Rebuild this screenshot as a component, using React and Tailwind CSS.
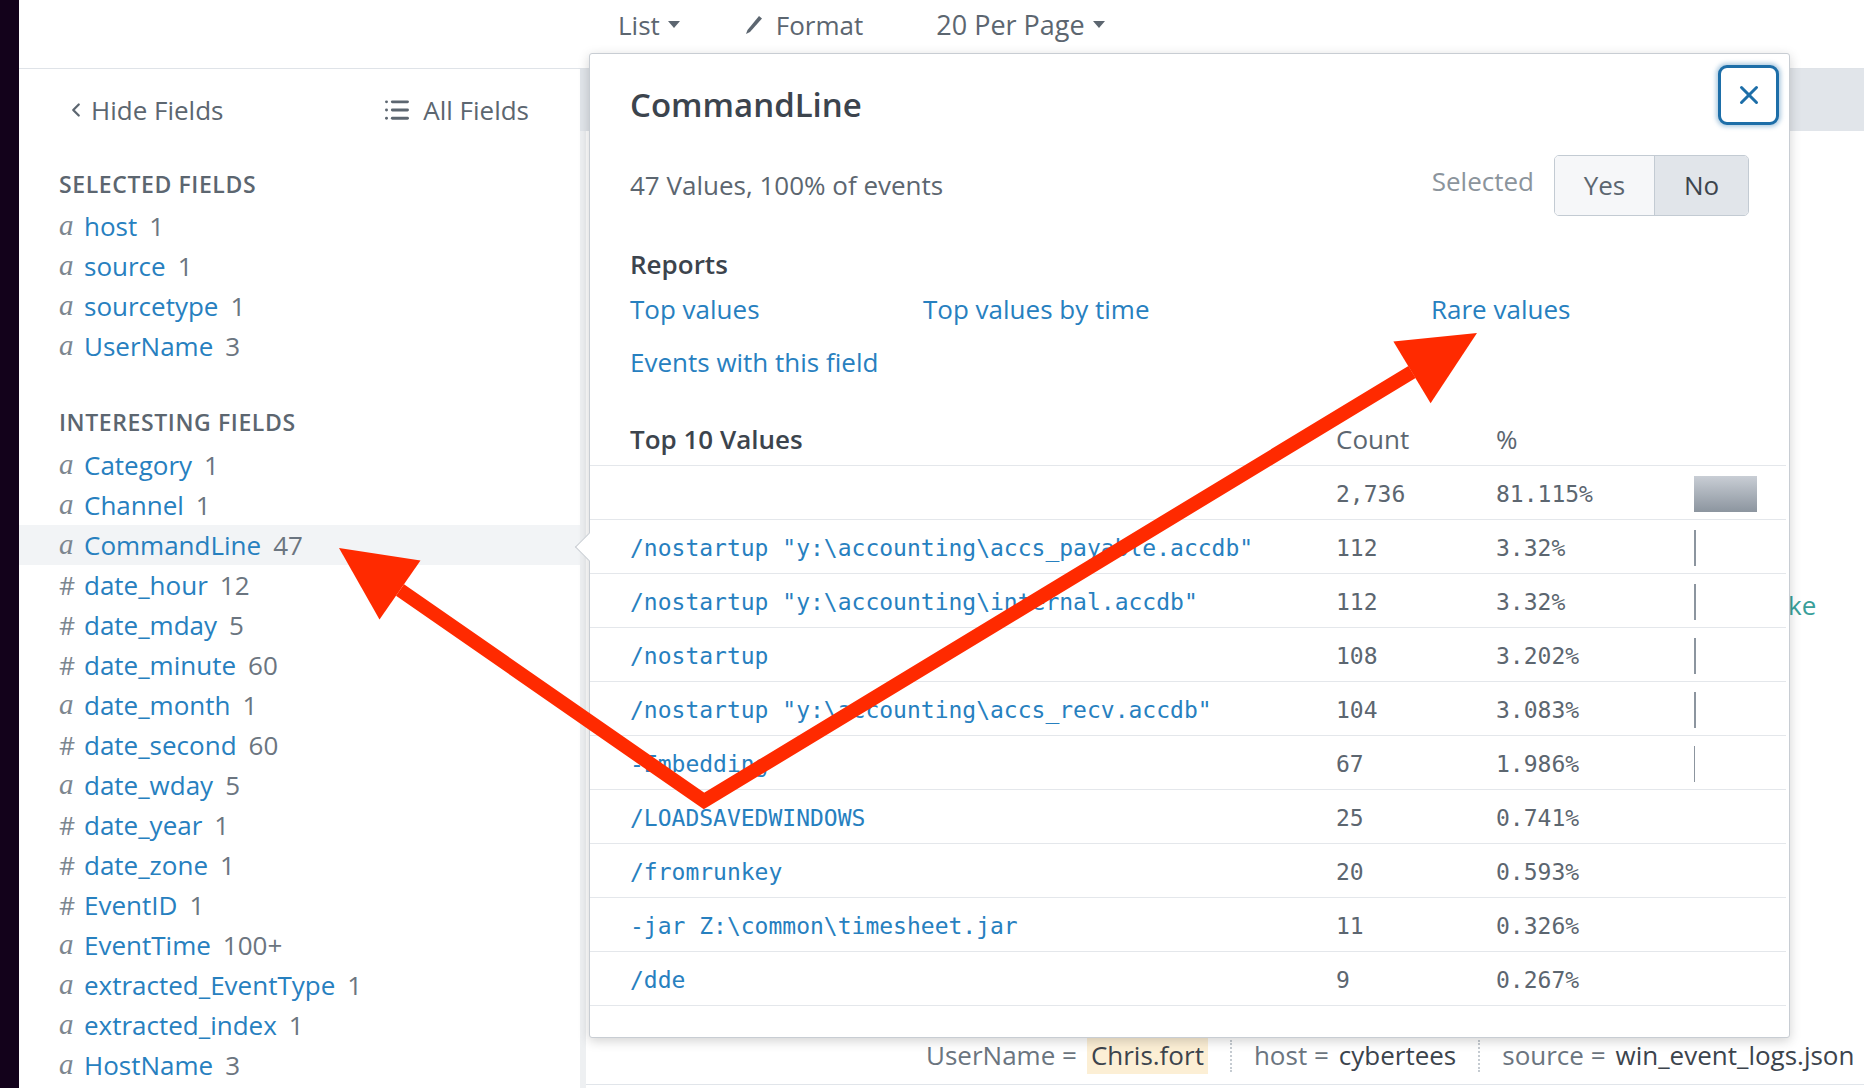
import React from 'react';
import { ChevronLeft, List, X } from 'lucide-react';

const selectedFields = [
  { t: 'a', name: 'host', count: '1' },
  { t: 'a', name: 'source', count: '1' },
  { t: 'a', name: 'sourcetype', count: '1' },
  { t: 'a', name: 'UserName', count: '3' },
];

const interestingFields = [
  { t: 'a', name: 'Category', count: '1' },
  { t: 'a', name: 'Channel', count: '1' },
  { t: 'a', name: 'CommandLine', count: '47', active: true },
  { t: '#', name: 'date_hour', count: '12' },
  { t: '#', name: 'date_mday', count: '5' },
  { t: '#', name: 'date_minute', count: '60' },
  { t: 'a', name: 'date_month', count: '1' },
  { t: '#', name: 'date_second', count: '60' },
  { t: 'a', name: 'date_wday', count: '5' },
  { t: '#', name: 'date_year', count: '1' },
  { t: '#', name: 'date_zone', count: '1' },
  { t: '#', name: 'EventID', count: '1' },
  { t: 'a', name: 'EventTime', count: '100+' },
  { t: 'a', name: 'extracted_EventType', count: '1' },
  { t: 'a', name: 'extracted_index', count: '1' },
  { t: 'a', name: 'HostName', count: '3' },
];

const topValues = [
  { value: '', count: '2,736', pct: '81.115%', n: 81.115 },
  { value: '/nostartup "y:\\accounting\\accs_payable.accdb"', count: '112', pct: '3.32%', n: 3.32 },
  { value: '/nostartup "y:\\accounting\\internal.accdb"', count: '112', pct: '3.32%', n: 3.32 },
  { value: '/nostartup', count: '108', pct: '3.202%', n: 3.202 },
  { value: '/nostartup "y:\\accounting\\accs_recv.accdb"', count: '104', pct: '3.083%', n: 3.083 },
  { value: '-Embedding', count: '67', pct: '1.986%', n: 1.986 },
  { value: '/LOADSAVEDWINDOWS', count: '25', pct: '0.741%', n: 0.741 },
  { value: '/fromrunkey', count: '20', pct: '0.593%', n: 0.593 },
  { value: '-jar Z:\\common\\timesheet.jar', count: '11', pct: '0.326%', n: 0.326 },
  { value: '/dde', count: '9', pct: '0.267%', n: 0.267 },
];

const Caret = () => (
  <svg width="12" height="8" viewBox="0 0 12 8" className="ml-[8px]">
    <polygon points="0,0 12,0 6,7" fill="#5c6670" />
  </svg>
);

const FieldRow = ({ f }) => (
  <div className={`flex items-center h-[40px] pl-[40px] ${f.active ? 'bg-[#f2f4f6]' : ''}`}>
    <span className="w-[25px] text-[#7d868f]">
      {f.t === 'a' ? (
        <span className="font-['Liberation_Serif',serif] italic text-[29px]">a</span>
      ) : (
        <span className="text-[25px]">#</span>
      )}
    </span>
    <span className="text-[#2780bf]">{f.name}</span>
    <span className="ml-[12px] text-[#6b7580]">{f.count}</span>
  </div>
);

const Popup = () => (
  <div className="absolute left-[589px] top-[53px] w-[1201px] bg-white border border-[#c8cdd3] rounded-[3px] shadow-[0_3px_12px_rgba(0,0,0,0.18)]">
    {/* notch */}
    <div className="absolute -left-[11px] top-[483px] w-[20px] h-[20px] bg-white border-l border-b border-[#c8cdd3] rotate-45" />

    <button className="absolute top-[11px] right-[10px] w-[61px] h-[60px] rounded-[9px] border-[3px] border-[#1d6ea8] bg-white flex items-center justify-center shadow-[0_0_4px_2px_rgba(29,110,168,0.35)]">
      <X size={30} strokeWidth={2.4} color="#1d6ea8" />
    </button>

    <div className="pl-[40px] pr-[40px] pt-[31px]">
      <div className="text-[33px] leading-[40px] font-semibold text-[#3c444d]">CommandLine</div>

      <div className="mt-[30px] h-[61px] flex items-center justify-between">
        <span className="text-[#5c6670]">47 Values, 100% of events</span>
        <div className="flex items-center">
          <span className="text-[#8b949c] -mt-[8px]">Selected</span>
          <div className="ml-[20px] flex h-[61px] border border-[#c3cbd3] rounded-[5px] overflow-hidden">
            <div className="w-[99px] bg-[#f6f7f9] flex items-center justify-center text-[#5c6670]">Yes</div>
            <div className="w-[94px] bg-[#e1e5ea] border-l border-[#c3cbd3] flex items-center justify-center text-[#3c444d]">No</div>
          </div>
        </div>
      </div>

      <div className="mt-[32px] leading-[32px] font-semibold text-[#3c444d]">Reports</div>
      <div className="mt-[3px] grid grid-cols-[293px_508px_1fr] text-[#2780bf]">
        <div className="h-[53px] flex items-center">Top values</div>
        <div className="h-[53px] flex items-center">Top values by time</div>
        <div className="h-[53px] flex items-center">Rare values</div>
        <div className="h-[53px] flex items-center col-span-3">Events with this field</div>
      </div>
    </div>

    <div className="mt-[25px] mr-[3px] pb-[31px]">
      <div className="h-[52px] grid grid-cols-[706px_160px_198px_1fr] items-center pl-[40px] border-b border-[#e4e7eb]">
        <span className="font-semibold text-[#3c444d]">Top 10 Values</span>
        <span className="text-[#5c6670]">Count</span>
        <span className="text-[#5c6670]">%</span>
        <span />
      </div>
      {topValues.map((v, i) => {
        const w = Math.floor((v.n / 81.115) * 63);
        return (
          <div key={i} className="h-[54px] grid grid-cols-[706px_160px_198px_1fr] items-center pl-[40px] pt-[3px] border-b border-[#e4e7eb] font-['DejaVu_Sans_Mono',monospace] text-[23px]">
            <span className="text-[#2780bf] whitespace-pre">{v.value}</span>
            <span className="text-[#5c6670]">{v.count}</span>
            <span className="text-[#5c6670]">{v.pct}</span>
            <span className="flex items-center">
              {i === 0 ? (
                <span className="block w-[63px] h-[36px] bg-linear-to-b from-[#c9ced5] to-[#8c959f]" />
              ) : w >= 1 ? (
                <span className="block h-[36px] bg-[#8c959f]" style={{ width: w }} />
              ) : null}
            </span>
          </div>
        );
      })}
    </div>
  </div>
);

const Arrows = () => (
  <svg className="absolute inset-0 pointer-events-none" width="1864" height="1088" viewBox="0 0 1864 1088">
    <polyline points="400,590 704,801 1412,372" fill="none" stroke="#ff2a00" strokeWidth="14" strokeLinejoin="miter" />
    <polygon points="339,548 420.5,560.4 379.5,619.6" fill="#ff2a00" />
    <polygon points="1477,333 1430.6,403.2 1393.4,341.6" fill="#ff2a00" />
  </svg>
);

export default function App() {
  return (
    <div className="relative w-[1864px] h-[1088px] overflow-hidden bg-white flex font-['Open_Sans',sans-serif] text-[26px]">
      <div className="w-[19px] shrink-0 bg-[#13021b]" />

      <div className="flex-1 flex flex-col">
        {/* toolbar */}
        <div className="h-[69px] shrink-0 border-b border-[#dfe3e8] flex items-start pl-[599px] pt-[9px] text-[#5c6670] leading-[32px]">
          <span className="flex items-center">List<Caret /></span>
          <span className="flex items-center ml-[66px]">
            <svg width="16" height="18" viewBox="0 0 16 18" className="mr-[14px]">
              <polygon points="13,0 16,2.5 4,16 0,18 1.5,14" fill="#5c6670" />
            </svg>
            Format
          </span>
          <span className="flex items-center ml-[73px] text-[27px]">20 Per Page<Caret /></span>
        </div>

        <div className="flex-1 flex">
          {/* sidebar */}
          <aside className="w-[561px] shrink-0 bg-white">
            <div className="h-[40px] mt-[21px] flex items-center justify-between pl-[46px] pr-[51px] text-[#5c6670]">
              <span className="flex items-center">
                <ChevronLeft size={22} strokeWidth={2.5} className="mr-[4px]" />
                Hide Fields
              </span>
              <span className="flex items-center">
                <List size={28} strokeWidth={2.5} className="mr-[12px]" />
                All Fields
              </span>
            </div>

            <div className="mt-[40px] pl-[40px] leading-[28px] text-[23px] tracking-[0.6px] font-semibold text-[#5c6670]">SELECTED FIELDS</div>
            <div className="mt-[8px]">
              {selectedFields.map((f) => <FieldRow key={f.name} f={f} />)}
            </div>

            <div className="mt-[42px] pl-[40px] leading-[28px] text-[23px] tracking-[0.6px] font-semibold text-[#5c6670]">INTERESTING FIELDS</div>
            <div className="mt-[9px]">
              {interestingFields.map((f) => <FieldRow key={f.name} f={f} />)}
            </div>
          </aside>

          {/* events area behind the popup */}
          <main className="flex-1 flex flex-col">
            <div className="h-[62px] shrink-0 bg-[#e1e5ea]" />
            <div className="flex-1 border-l-[6px] border-[#eef0f2] flex flex-col">
              <div className="mt-[459px] pl-[1202px] leading-[30px] text-[#3a9f9a]">ke</div>
              <div className="mt-[417px] h-[37px] pl-[340px] flex items-center text-[#6b7580]">
                <span>UserName =</span>
                <span className="ml-[10px] px-[4px] h-[37px] flex items-center bg-[#fcefd5] text-[#3c444d]">Chris.fort</span>
                <span className="mx-[22px] h-[32px] border-l-2 border-dotted border-[#c5cbd1]" />
                <span>host =</span>
                <span className="ml-[10px] text-[#3c444d]">cybertees</span>
                <span className="mx-[22px] h-[32px] border-l-2 border-dotted border-[#c5cbd1]" />
                <span>source =</span>
                <span className="ml-[10px] text-[#3c444d] whitespace-nowrap">win_event_logs.json</span>
              </div>
              <div className="mt-[10px] border-b border-[#e1e5ea]" />
            </div>
          </main>
        </div>
      </div>

      <Popup />
      <Arrows />
    </div>
  );
}
